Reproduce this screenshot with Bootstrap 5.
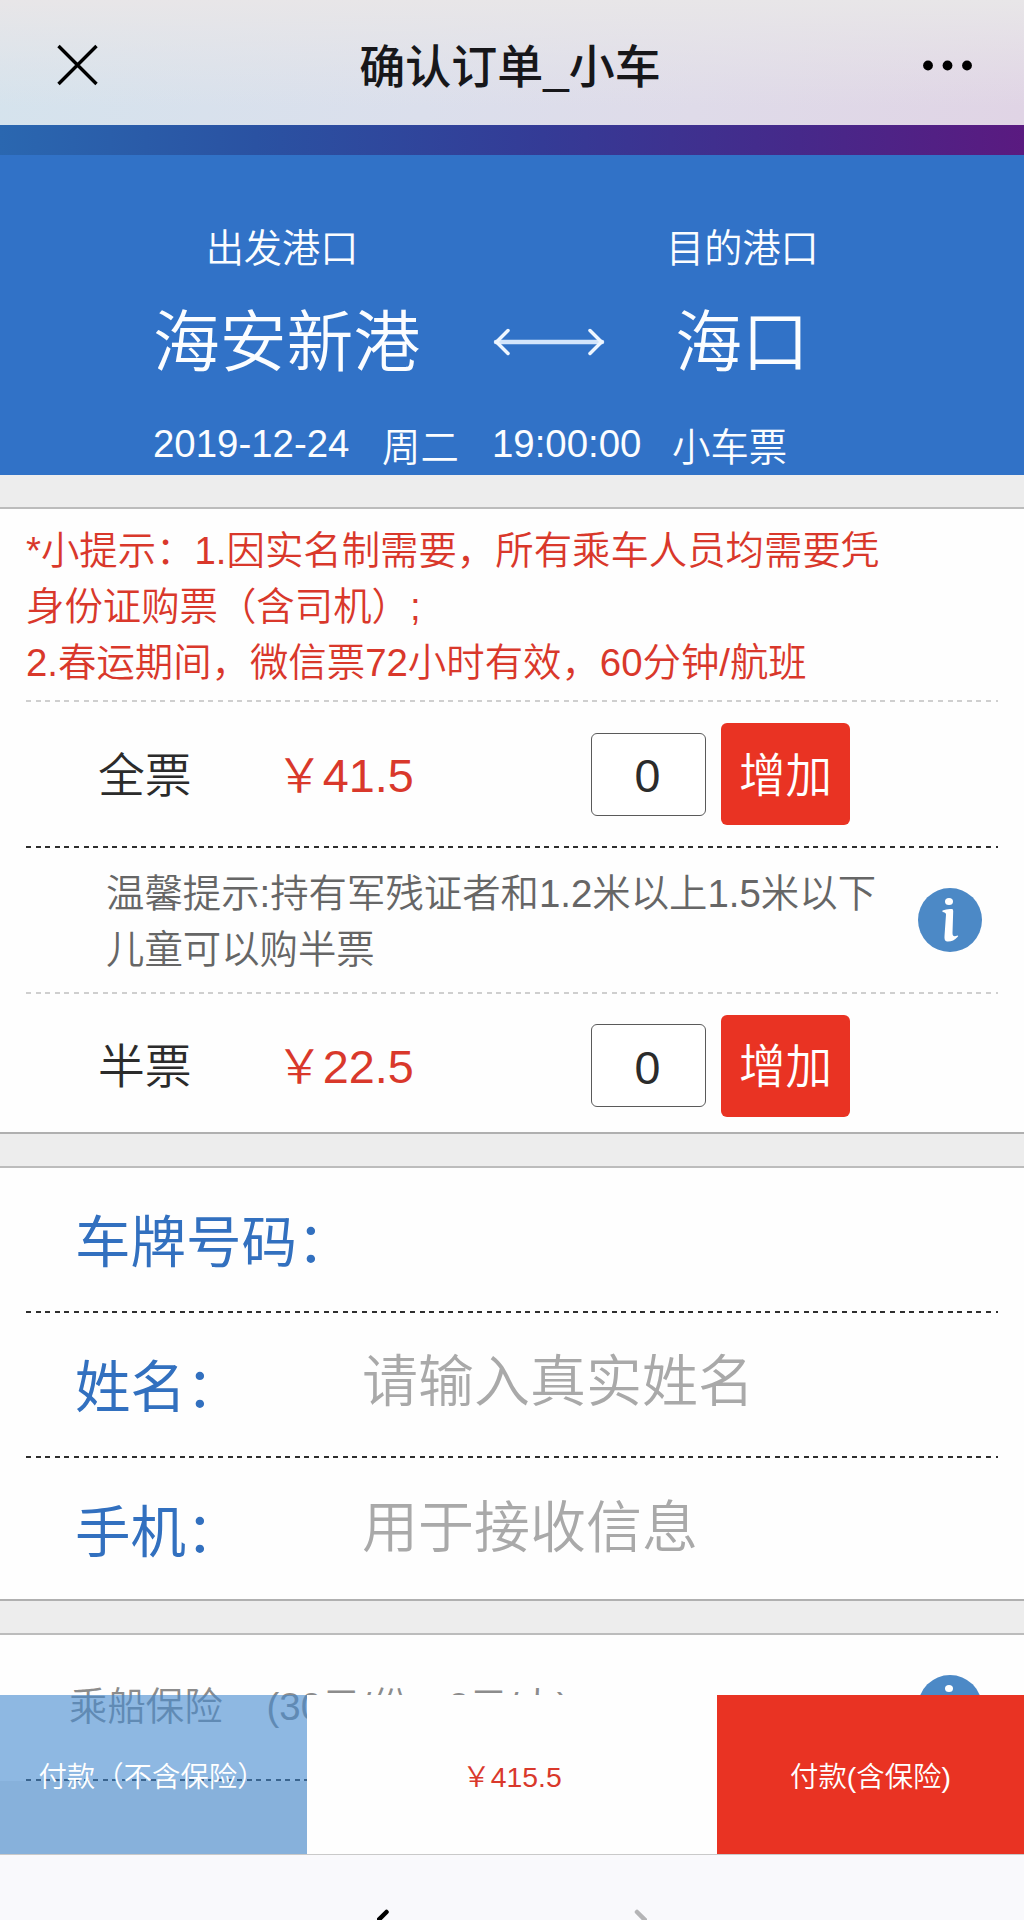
<!DOCTYPE html>
<html lang="zh-CN">
<head>
<meta charset="utf-8">
<meta name="viewport" content="width=device-width, initial-scale=1">
<title>确认订单_小车</title>
<link href="https://cdn.jsdelivr.net/npm/bootstrap@5.3.0/dist/css/bootstrap.min.css" rel="stylesheet">
<style>
  body { font-family: "Liberation Sans", "Noto Sans CJK SC", sans-serif; font-weight: 350; background: #fefefe; color: #2b2b2b; }
  .screen { width: 1024px; height: 1920px; }
  .fs-note { font-size: 38.4px; line-height: 56px; }
  .fs-item { font-size: 46.8px; line-height: 56px; }
  .fs-field { font-size: 55.5px; line-height: 70px; }
  .fs-pay { font-size: 28.4px; line-height: 40px; }
  .titlebar { height: 125px; padding: 5px 50px 0 54px;
    background: linear-gradient(180deg, rgba(232,230,232,1) 0%, rgba(232,230,232,0) 85%), linear-gradient(97deg, #d5e3ed 0%, #dbdfec 42%, #dfdbe9 68%, #e0d4e5 100%); }
  .titlebar h1 { font-size: 46px; line-height: 60px; font-weight: 500; color: #17171a; padding: 3px 4px 0 0; }
  .color-strip { height: 30px; background: linear-gradient(90deg, #2a67b0 0%, #2a52a2 25%, #343b96 53%, #46298a 78%, #5a1a80 100%); }
  .trip { height: 320px; background: #3172c7; color: #fbfdff; padding-top: 64px; }
  .trip-grid { padding-left: 153px; }
  .port-label { font-size: 38.2px; line-height: 60px; height: 60px; }
  .port-name { font-size: 66.8px; line-height: 90px; height: 96px; margin-top: 19px; white-space: nowrap; }
  .from-col { width: 258px; }
  .to-col { width: 152px; margin-left: 61px; }
  .arrow-col { width: 112px; margin-left: 82px; padding-top: 79px; }
  .trip-meta { padding: 22px 0 0 153px; font-size: 38.4px; line-height: 56px; white-space: nowrap; }
  .meta-date { width: 229px; }
  .meta-day { width: 110px; padding-top: 4px; }
  .meta-time { width: 180px; }
  .meta-kind { padding-top: 4px; }
  .sep-band { height: 34px; background: #ededed; border-bottom: 2px solid #bcbcbc; }
  .sep-band.ruled { height: 36px; border-top: 2px solid #b0b0b0; }
  .dash { height: 2px; margin: 0 26px; background: repeating-linear-gradient(90deg, #2e2e2e 0 5px, transparent 5px 9.6px); }
  .dash.pale { background: repeating-linear-gradient(90deg, #cfcfcf 0 5px, transparent 5px 9.6px); }
  .red-text { color: #d9382b; }
  .tips { height: 191px; padding: 14px 26px 0; white-space: nowrap; }
  .ticket { height: 144px; padding-left: 98px; }
  .ticket.last-row { height: 138px; padding-top: 5px; }
  .ticket .kind { width: 178px; padding-top: 3px; }
  .ticket .cost { width: 315px; padding-top: 3px; }
  .ticket input { width: 115px; height: 83px; border: 1.5px solid #5a5a5a; border-radius: 6px; font-size: 46.6px; color: #2b2b2b; padding: 4px 2px 0 0; text-align: center; }
  .ticket .btn { width: 129px; height: 102px; margin-left: 15px; border-radius: 6px; background: #e93323; color: #fff; font-size: 46.6px; font-weight: 350; line-height: 60px; padding: 3px 0 0; }
  .hint { height: 144px; color: #666; padding-left: 106px; padding-right: 42px; }
  .hint p { white-space: nowrap; padding-top: 3px; }
  .field { height: 143px; padding-left: 75px; }
  .field.last-row { height: 141px; padding-top: 3px; }
  .field label { width: 287px; color: #3270bf; white-space: nowrap; padding-top: 6px; font-weight: 400; }
  .field .form-control { font-size: 56px; font-weight: 350; line-height: 70px; padding: 0 0 6px; border: 0; background: transparent; height: 84px; }
  .field .form-control::placeholder { color: #a9a9a9; opacity: 1; }
  .insurance { height: 144px; padding-left: 69px; padding-right: 42px; color: #8c8c8c; white-space: nowrap; }
  .insurance .rate { margin-left: 44px; }
  .below { height: 76px; background: #ededed; }
  .paybar { position: absolute; left: 0; top: 1695px; width: 1024px; height: 160px; border-bottom: 1px solid rgba(0,0,0,.15); }
  .paybar > div { padding-top: 4px; }
  .pay-plain { width: 307px; background: rgba(67,137,207,.6); color: #fff; }
  .pay-plain span { margin-right: 3px; }
  .pay-sum { width: 410px; background: #fefefe; }
  .pay-full { width: 307px; background: #e93323; color: #fff; }
  .browser-nav { position: absolute; left: 0; top: 1855px; width: 1024px; height: 65px; background: #f9f9fc; padding-top: 54px; }
</style>
</head>
<body>
<div class="screen position-relative overflow-hidden">
  <header class="titlebar d-flex align-items-center justify-content-between">
    <svg width="48" height="48" viewBox="0 0 48 48" fill="none" stroke="#000" stroke-width="3.4"><path d="M4.500 5L42.500 43M42.500 5L4.500 43"/></svg>
    <h1 class="m-0">确认订单_小车</h1>
    <svg width="52" height="12" viewBox="0 0 52 12"><circle cx="6" cy="6.500" r="4.900"/><circle cx="25.500" cy="6.500" r="4.900"/><circle cx="45" cy="6.500" r="4.900"/></svg>
  </header>
  <div class="color-strip"></div>

  <section class="trip">
    <div class="trip-grid d-flex">
      <div class="from-col text-center">
        <div class="port-label">出发港口</div>
        <div class="port-name">海安新港</div>
      </div>
      <div class="arrow-col">
        <svg class="d-block" width="112" height="80" viewBox="0 0 112 80" fill="none" stroke="#eef6ff" stroke-width="3.500" stroke-linecap="round"><path d="M3 44H109" stroke="#d3e5fb" stroke-width="4.500"/><path d="M15 32.500L3.500 44L15 55.500M97 32.500L108.500 44L97 55.500"/></svg>
      </div>
      <div class="to-col text-center">
        <div class="port-label text-nowrap">目的港口</div>
        <div class="port-name">海口</div>
      </div>
    </div>
    <div class="trip-meta d-flex">
      <span class="meta-date">2019-12-24</span><span class="meta-day">周二</span><span class="meta-time">19:00:00</span><span class="meta-kind">小车票</span>
    </div>
  </section>

  <div class="sep-band"></div>
  <section>
    <div class="tips fs-note red-text">*小提示：1.因实名制需要，所有乘车人员均需要凭<br>身份证购票（含司机）;<br>2.春运期间，微信票72小时有效，60分钟/航班</div>
    <div class="dash pale"></div>
    <div class="ticket fs-item d-flex align-items-center">
      <span class="kind">全票</span><span class="cost red-text">￥41.5</span><input type="text" value="0"><button class="btn" type="button">增加</button>
    </div>
    <div class="dash"></div>
    <div class="hint d-flex align-items-center justify-content-between">
      <p class="fs-note m-0">温馨提示:持有军残证者和1.2米以上1.5米以下<br>儿童可以购半票</p>
      <svg width="64" height="64" viewBox="0 0 64 64"><circle cx="32" cy="32" r="32" fill="#4c89c6"/><ellipse cx="31" cy="13.500" rx="4" ry="3.600" fill="#fff"/><path d="M24.500 22.500Q29 20.500 34 21Q35.200 21.200 35.200 23L34.500 45Q34.500 50 39.500 47.500Q41 47.500 39.500 49Q35 54 29 53.500Q26 53 26.500 48L28 26.500Q28 24.500 24.500 24Z" fill="#fff"/></svg>
    </div>
    <div class="dash pale"></div>
    <div class="ticket last-row fs-item d-flex align-items-center">
      <span class="kind">半票</span><span class="cost red-text">￥22.5</span><input type="text" value="0"><button class="btn" type="button">增加</button>
    </div>
  </section>

  <div class="sep-band ruled"></div>
  <section>
    <div class="field fs-field d-flex align-items-center"><label class="flex-shrink-0">车牌号码：</label></div>
    <div class="dash"></div>
    <div class="field fs-field d-flex align-items-center"><label class="flex-shrink-0">姓名：</label><input class="form-control" type="text" placeholder="请输入真实姓名"></div>
    <div class="dash"></div>
    <div class="field last-row fs-field d-flex align-items-center"><label class="flex-shrink-0">手机：</label><input class="form-control" type="text" placeholder="用于接收信息"></div>
  </section>

  <div class="sep-band ruled"></div>
  <section>
    <div class="insurance fs-note d-flex align-items-center justify-content-between">
      <div><span>乘船保险</span><span class="rate">(30元/份，2元/人)</span></div>
      <svg width="64" height="64" viewBox="0 0 64 64"><circle cx="32" cy="32" r="32" fill="#4c89c6"/><ellipse cx="31" cy="13.500" rx="4" ry="3.600" fill="#fff"/></svg>
    </div>
    <div class="dash"></div>
    <div class="below"></div>
  </section>

  <div class="paybar fs-pay d-flex">
    <div class="pay-plain d-flex align-items-center justify-content-center"><span>付款（不含保险）</span></div>
    <div class="pay-sum d-flex align-items-center justify-content-center red-text">￥415.5</div>
    <div class="pay-full d-flex align-items-center justify-content-center">付款(含保险)</div>
  </div>
  <nav class="browser-nav d-flex justify-content-center">
    <svg width="270" height="40" viewBox="0 0 270 40" fill="none" stroke-width="4.500" stroke-linecap="round"><path d="M9.500 3L-6 18.500L9.500 34" stroke="#000"/><path d="M260 3L275.500 18.500L260 34" stroke="#b4b4b6"/></svg>
  </nav>
</div>
<script src="https://cdn.jsdelivr.net/npm/bootstrap@5.3.0/dist/js/bootstrap.bundle.min.js"></script>
</body>
</html>
